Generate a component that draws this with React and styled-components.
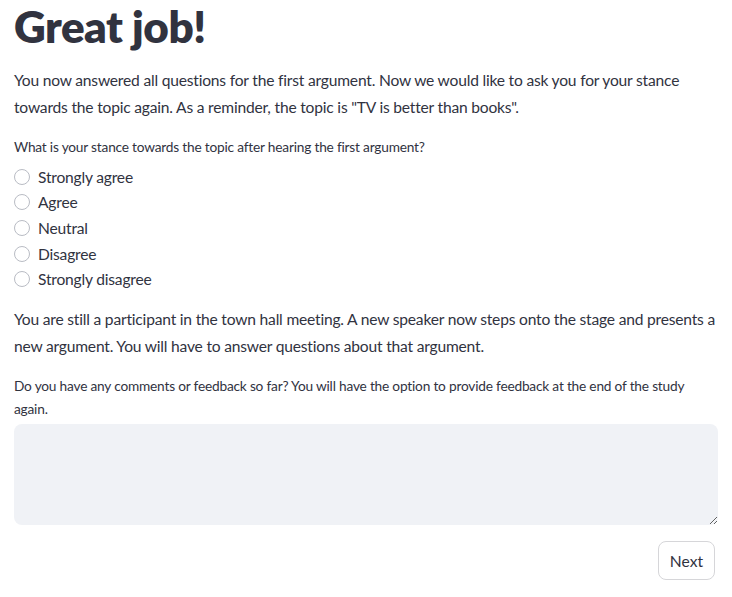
import React from "react";
import styled, { createGlobalStyle } from "styled-components";

const Global = createGlobalStyle`
  html, body { margin: 0; padding: 0; background: #fff; }
  body { font-family: Lato, "Noto Sans", sans-serif; color: #31333f; }
  * { box-sizing: border-box; }
`;

const Page = styled.main`
  padding: 0 14px;
  width: 732px;
`;

const Title = styled.h1`
  font-size: 44px;
  font-weight: 800;
  line-height: 1.2;
  margin: 0;
  padding: 0 0 14px;
  letter-spacing: -0.5px;
`;

const Para = styled.p`
  font-size: 15.6px;
  letter-spacing: -0.2px;
  line-height: 27px;
  margin: 0 0 ${(p) => p.$mb || 14}px;
`;

const Label = styled.div`
  font-size: 13.7px;
  letter-spacing: -0.2px;
  line-height: 23px;
  margin-bottom: ${(p) => p.$mb ?? 6}px;
`;

const RadioGroup = styled.div`
  display: flex;
  flex-direction: column;
  margin-bottom: 14px;
`;

const RadioRow = styled.label`
  display: flex;
  align-items: center;
  gap: 8px;
  height: 25.7px;
  font-size: 15.6px;
  letter-spacing: -0.2px;
`;

const Circle = styled.span`
  width: 16px;
  height: 16px;
  border-radius: 50%;
  border: 1px solid #b9bcc4;
  background: #fff;
  flex: none;
`;

const TextArea = styled.textarea`
  display: block;
  width: 100%;
  height: 101px;
  border: none;
  border-radius: 8px;
  background: #f0f2f6;
  padding: 12px;
  font: inherit;
  resize: vertical;
`;

const Footer = styled.div`
  display: flex;
  justify-content: flex-end;
  padding: 16px 3px 0 0;
`;

const Button = styled.button`
  height: 39px;
  padding: 0 11px;
  border: 1px solid #d6d6d9;
  border-radius: 8px;
  background: #fff;
  color: #31333f;
  font: inherit;
  font-size: 15.6px;
`;

const options = ["Strongly agree", "Agree", "Neutral", "Disagree", "Strongly disagree"];

export default function App() {
  return (
    <Page>
      <Global />
      <Title>Great job!</Title>
      <Para>
        You now answered all questions for the first argument. Now we would like to ask you for your stance
        towards the topic again. As a reminder, the topic is "TV is better than books".
      </Para>
      <Label>What is your stance towards the topic after hearing the first argument?</Label>
      <RadioGroup>
        {options.map((o) => (
          <RadioRow key={o}>
            <Circle />
            {o}
          </RadioRow>
        ))}
      </RadioGroup>
      <Para $mb={14}>
        You are still a participant in the town hall meeting. A new speaker now steps onto the stage and presents a
        new argument. You will have to answer questions about that argument.
      </Para>
      <Label $mb={4}>
        Do you have any comments or feedback so far? You will have the option to provide feedback at the end of the study
        again.
      </Label>
      <TextArea />
      <Footer>
        <Button>Next</Button>
      </Footer>
    </Page>
  );
}
